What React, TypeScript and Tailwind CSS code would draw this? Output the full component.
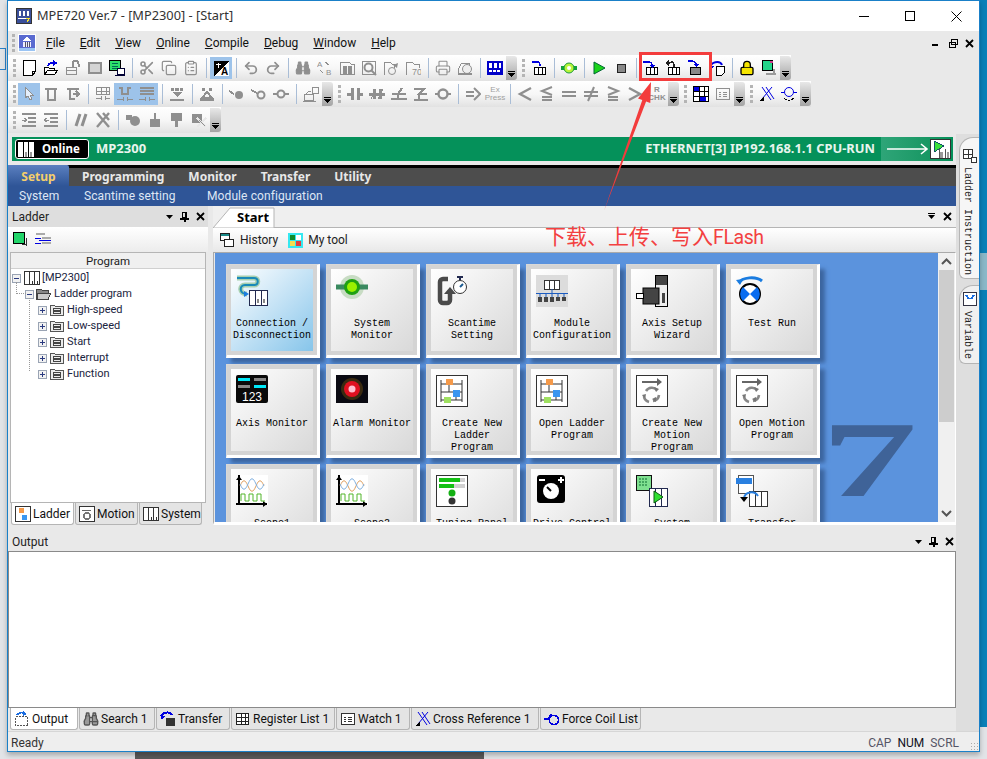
import React from 'react';
import { Scissors, Copy, ClipboardList, Undo2, Redo2, Binoculars, Printer, Lock } from 'lucide-react';

const G = '#8f8f8f';
const B = '#0000e0';

// 16x16 toolbar glyphs
function Svg({ children, size = 16 }: { children: React.ReactNode; size?: number }) {
  return (
    <svg width={size} height={size} viewBox={`0 0 ${size} ${size}`} shapeRendering="crispEdges" className="block shrink-0">
      {children}
    </svg>
  );
}

const plc = (c: string) => (
  <g fill="#fff" stroke={c}>
    <rect x="3.5" y="7.5" width="11" height="7" />
    <path d="M7.5 7.5v7M11.5 7.5v7" />
  </g>
);

const tb: Record<string, React.ReactNode> = {
  new: <Svg><path d="M2.5 0.5h12v11l-3 4h-9z" fill="#fff" stroke="#000" /><path d="M11.5 15v-4h3" fill="none" stroke="#000" /></Svg>,
  open: <Svg><path d="M1.5 14.5v-7h4l1 1h5v6z" fill="#fff" stroke="#000" /><path d="M1.5 14.5l3-4h10l-3 4z" fill="#fff" stroke="#000" /><path d="M5 6c1-3 4-4 7-3" fill="none" stroke={B} strokeWidth="2" /><path d="M10 0l5 3-5 3z" fill={B} /></Svg>,
  openG: <Svg><path d="M1.5 14.5v-7h10v7zM1.5 10.5h10" fill="none" stroke={G} /><path d="M7.5 7v-3a3 3 0 016 0v3" fill="none" stroke={G} strokeWidth="2" /></Svg>,
  film: <Svg><rect x="1" y="2" width="14" height="12" fill={G} /><rect x="3" y="4" width="10" height="8" fill="#d4d4d4" /></Svg>,
  green: <Svg><rect x="0.5" y="0.5" width="11" height="10" fill="#2ee06a" stroke="#000" /><path d="M3 3h6M3 6h6M3 8h6" stroke="#065" /><rect x="8" y="8" width="7" height="6" fill="#fff" stroke="#003" /><path d="M6 15h10" stroke="#003" /></Svg>,
  cut: <Scissors size={16} color={G} strokeWidth={2.4} />,
  copy: <Copy size={16} color={G} strokeWidth={1.8} />,
  paste: <ClipboardList size={16} color={G} strokeWidth={1.8} />,
  lang: <Svg><rect x="1" y="1" width="15" height="15" fill="#000" /><path d="M16 1v15H1z" fill="#fff" /><path d="M3 4h5M5 3v5" stroke="#fff" /><text x="8" y="15" fontSize="10" fontWeight="700" fontFamily="Liberation Sans, sans-serif" fill="#000">A</text></Svg>,
  undo: <Undo2 size={16} color={G} strokeWidth={2.6} />,
  redo: <Redo2 size={16} color={G} strokeWidth={2.6} />,
  bino: <Binoculars size={16} color={G} fill={G} strokeWidth={1.6} />,
  ab: <Svg><text x="0" y="7" fontSize="8" fill={G} fontFamily="Liberation Sans, sans-serif">A</text><text x="9" y="15" fontSize="8" fill={G} fontFamily="Liberation Sans, sans-serif">B</text><path d="M8 2l4 3M3 10l3 3" stroke={G} /></Svg>,
  bino2: <Svg><path d="M1 2h9l2 2h3v10H1z" fill="none" stroke={G} /><rect x="4" y="6" width="4" height="8" fill={G} /><rect x="9" y="6" width="4" height="8" fill={G} /></Svg>,
  scope: <Svg><rect x="1.5" y="1.5" width="13" height="13" fill="none" stroke={G} /><circle cx="7.5" cy="7.5" r="4" fill="none" stroke={G} strokeWidth="2" shapeRendering="auto" /><path d="M10 10l5 5" stroke={G} strokeWidth="2" shapeRendering="auto" /></Svg>,
  folderA: <Svg><path d="M1.5 14.5v-12h6l2 2h2v3" fill="none" stroke={G} /><circle cx="9" cy="11" r="3.5" fill="none" stroke={G} shapeRendering="auto" /><path d="M10 5l5-2-1 5z" fill={G} shapeRendering="auto" /></Svg>,
  folderB: <Svg><path d="M1.5 14.5v-12h6l2 2h5v3" fill="none" stroke={G} /><text x="7" y="15" fontSize="9" fill={G} fontFamily="Liberation Sans, sans-serif">70</text></Svg>,
  print: <Printer size={16} color={G} strokeWidth={1.6} />,
  preview: <Svg><path d="M1.5 13.5v-5l3-5h8v3" fill="none" stroke={G} /><circle cx="10" cy="9" r="4.5" fill="#eee" stroke={G} shapeRendering="auto" /><path d="M1 14h14" stroke={G} strokeWidth="2" /></Svg>,
  reg: <Svg><rect x="0" y="1" width="16" height="14" fill="#0000c8" /><path d="M2 3h3v5H2zM7 3h3v5H7zM12 3h2v5h-2z" fill="#fff" /><path d="M2 11h12" stroke="#fff" strokeWidth="2" strokeDasharray="3 1" /></Svg>,
  plcUp: <Svg>{plc('#000')}<path d="M1 2h5c2 0 3 1 3 4" fill="none" stroke={B} strokeWidth="1.6" /></Svg>,
  led: <Svg><path d="M0 8h16" stroke="#12a33c" strokeWidth="4" /><circle cx="8" cy="8" r="5" fill="#b9f53a" shapeRendering="auto" stroke="#1a9a3a" /><circle cx="8" cy="8" r="2" fill="#fff" shapeRendering="auto" /></Svg>,
  play: <Svg><path d="M3 2l11 6-11 6z" fill="#1bd41b" stroke="#063" shapeRendering="auto" /></Svg>,
  stop: <Svg><rect x="4" y="4" width="8" height="8" fill="#888" stroke="#222" /></Svg>,
  dl: <Svg>{plc('#000')}<path d="M0 2h5c2 0 4 1 4 3" fill="none" stroke={B} strokeWidth="1.4" /><path d="M6 5h6l-3 3z" fill={B} /></Svg>,
  ul: <Svg>{plc('#000')}<path d="M3 5c0-2 2-3 5-3 1 0 1 2 1 5" fill="none" stroke="#222" strokeWidth="1.4" /><path d="M0 3l4-3v6z" fill="#222" /></Svg>,
  flash: <Svg><rect x="3.5" y="7.5" width="10" height="7" fill="#888" stroke="#000" /><path d="M1 1h4c2 0 4 2 4 3" fill="none" stroke={B} strokeWidth="1.4" /><path d="M6 4h6l-3 3z" fill={B} /></Svg>,
  undoDoc: <Svg><path d="M7.5 6.5h8v6l-3 3h-5z" fill="#fff" stroke="#000" /><path d="M2 7C1 2 11 0 13 5" fill="none" stroke={B} strokeWidth="2" shapeRendering="auto" /><path d="M0 5l5 1-3 4z" fill={B} /></Svg>,
  lock: <Lock size={16} color="#000" fill="#f5e400" strokeWidth={2} />,
  greenG: <Svg><rect x="1.5" y="0.5" width="10" height="10" fill="#22d58a" stroke="#000" /><path d="M9 1h3v2H9z" fill="#d04090" /><path d="M5 13.5h10M13 9v5" stroke="#9a9a9a" strokeWidth="2" /></Svg>,
  arrow: <Svg><path d="M4 1v11l3-2 2 4 2-1-2-4h3z" fill="#e4eefa" stroke={G} /></Svg>,
  tee: <Svg><path d="M2 2.5h12M4.5 3v11h7V3" fill="none" stroke={G} strokeWidth="2" /></Svg>,
  teeR: <Svg><path d="M2 2.5h12M4.5 3v10h5" fill="none" stroke={G} strokeWidth="2" /><path d="M8 8h5M11 5l3 3-3 3" fill="none" stroke={G} strokeWidth="1.5" /></Svg>,
  grid: <Svg><rect x="1.5" y="1.5" width="13" height="7" fill="none" stroke={G} /><path d="M1 5h14M6 1v7M11 1v7" stroke={G} /><path d="M1 12h5M10 12h5M6 10v4M10 10v4" stroke={G} /></Svg>,
  branch: <Svg><path d="M2 2h3v6h6V2h3" fill="none" stroke={G} strokeWidth="2" /><path d="M0 13h6M10 13h6M6 11v4M10 11v4" stroke={G} /></Svg>,
  lines: <Svg><path d="M1 2h14M1 5h14M1 8h14" stroke={G} strokeWidth="2" /><path d="M0 13h6M10 13h6M6 11v4M10 11v4" stroke={G} /></Svg>,
  downA: <Svg><path d="M2 2h3v3H2zM6 2h4v3H6zM11 2h3v3h-3z" fill={G} /><path d="M3 6h10l-5 5z" fill={G} /><path d="M1 14h14" stroke={G} strokeWidth="2" /></Svg>,
  upA: <Svg><path d="M3 2h3v3H3zM10 2h3v3h-3z" fill={G} /><path d="M8 6l5 6H3z" fill="none" stroke={G} strokeWidth="2" /><path d="M1 14h14" stroke={G} strokeWidth="2" /></Svg>,
  coilA: <Svg><path d="M0 5l5 3" stroke={G} strokeWidth="2" /><circle cx="10" cy="9" r="4" fill={G} shapeRendering="auto" /></Svg>,
  coilB: <Svg><path d="M0 4l6 3" stroke={G} strokeWidth="2" /><circle cx="10" cy="9" r="3.5" fill="none" stroke={G} strokeWidth="2" shapeRendering="auto" /></Svg>,
  coilC: <Svg><path d="M0 8h4M12 8h4" stroke={G} strokeWidth="2" /><circle cx="8" cy="8" r="3.5" fill="none" stroke={G} strokeWidth="2" shapeRendering="auto" /></Svg>,
  tag: <Svg><path d="M1.5 14.5v-6h9v6z" fill="none" stroke={G} /><path d="M0 15h13" stroke={G} /><path d="M9 1.5h6v6H9z" fill="none" stroke={G} /><path d="M3 8l3-3h2" stroke={G} fill="none" /></Svg>,
  no: <Svg><path d="M0 8h4M12 8h4M5 2v12M11 2v12" stroke={G} strokeWidth="3" /></Svg>,
  nc: <Svg><path d="M0 8h16M5 3v10M11 3v10" stroke={G} strokeWidth="3" /><path d="M2 13l5-10M9 13l5-10" stroke={G} /></Svg>,
  rise: <Svg><path d="M0 13h16" stroke={G} strokeWidth="2" /><path d="M1 8h6l4-6M7 8v5M7 8h8" fill="none" stroke={G} strokeWidth="2" /></Svg>,
  fall: <Svg><path d="M1 3h10l-5 5h8M6 8v6M1 14h14" fill="none" stroke={G} strokeWidth="2" /></Svg>,
  coil: <Svg><path d="M0 8h3M13 8h3" stroke={G} strokeWidth="2" /><circle cx="8" cy="8" r="4.5" fill="none" stroke={G} strokeWidth="2.4" shapeRendering="auto" /></Svg>,
  fwd: <Svg><path d="M1 6h8M1 10h8M9 2l6 6-6 6" fill="none" stroke={G} strokeWidth="2" shapeRendering="auto" /></Svg>,
  lt: <Svg><path d="M14 2L3 8l11 6" fill="none" stroke={G} strokeWidth="2.4" shapeRendering="auto" /></Svg>,
  le: <Svg><path d="M13 1L3 5l10 4M3 11h10M3 14h10" fill="none" stroke={G} strokeWidth="2" shapeRendering="auto" /></Svg>,
  eq: <Svg><path d="M1 6h14M1 10h14" stroke={G} strokeWidth="2.4" /></Svg>,
  ne: <Svg><path d="M1 6h14M1 10h14" stroke={G} strokeWidth="2" /><path d="M11 1L5 15" stroke={G} strokeWidth="2" shapeRendering="auto" /></Svg>,
  ge: <Svg><path d="M3 1l10 4-10 4M3 11h10M3 14h10" fill="none" stroke={G} strokeWidth="2" shapeRendering="auto" /></Svg>,
  gt: <Svg><path d="M2 2l11 6-11 6" fill="none" stroke={G} strokeWidth="2.4" shapeRendering="auto" /></Svg>,
  table: <Svg><rect x="0.5" y="0.5" width="15" height="15" fill="#fff" stroke="#000" /><path d="M0 5h16M0 10h16M6 0v16M11 0v16" stroke="#000" /><rect x="1" y="1" width="5" height="4" fill={B} /><rect x="7" y="11" width="6" height="4" fill={B} /></Svg>,
  watch: <Svg><rect x="1.5" y="2.5" width="13" height="11" rx="1" fill="none" stroke={G} /><path d="M4 6h2M8 6h4M4 8h2M8 8h4M4 10h2M8 10h4" stroke={G} /></Svg>,
  xref: <Svg><path d="M3 1l9 13M7 1l8 12M13 1L3 13" stroke={B} shapeRendering="auto" /><path d="M0 15h5v-5z" fill="#000" /></Svg>,
  forceCoil: <Svg><path d="M0 6h3M13 6h3" stroke={B} /><circle cx="8" cy="6" r="4.5" fill="none" stroke={B} shapeRendering="auto" /><path d="M3 12c3 3 7 3 10 0" fill="none" stroke="#000" /></Svg>,
  indent: <Svg><path d="M1 2h14M7 6h8M7 10h8M1 14h14" stroke={G} strokeWidth="2" /><path d="M1 8h4M3 6l3 2-3 2" fill="none" stroke={G} /></Svg>,
  outdent: <Svg><path d="M1 2h14M7 6h8M7 10h8M1 14h14" stroke={G} strokeWidth="2" /><path d="M2 8h4M4 6L1 8l3 2" fill="none" stroke={G} /></Svg>,
  slash: <Svg><path d="M7 2L3 14M13 2L9 14" stroke={G} strokeWidth="3" shapeRendering="auto" /></Svg>,
  cross: <Svg><path d="M2 1l12 14M8 1l6 7M14 1L2 15" stroke={G} strokeWidth="2.4" shapeRendering="auto" /></Svg>,
  nodeA: <Svg><circle cx="10" cy="9" r="5" fill={G} shapeRendering="auto" /><rect x="1" y="3" width="6" height="5" fill={G} /></Svg>,
  nodeB: <Svg><rect x="3" y="7" width="10" height="8" fill={G} /><rect x="7" y="1" width="2" height="6" fill={G} /></Svg>,
  nodeC: <Svg><rect x="2" y="1" width="11" height="8" fill={G} /><rect x="6" y="9" width="3" height="6" fill={G} /></Svg>,
  nodeD: <Svg><rect x="1" y="2" width="10" height="9" fill={G} /><path d="M6 6l9 9M15 6l-9 9" stroke="#e8e8e8" strokeWidth="2" /><path d="M8 8l6 6" stroke={G} /></Svg>,
};

type Item = string;

const row1: Item[] = ['new', 'open', 'openG', 'film', 'green', '|', 'cut', 'copy', 'paste', '|', '*lang', '|', 'undo', 'redo', '|', 'bino', 'ab', 'bino2', 'scope', 'folderA', 'folderB', '|', 'print', 'preview', '|', 'reg', 'v', ':', 'plcUp', '|', 'led', '|', 'play', 'stop', '|', 'dl', 'ul', 'flash', 'undoDoc', '|', 'lock', 'greenG', 'v'];
const row2: Item[] = ['*arrow', 'tee', 'teeR', '|', 'grid', '*branch', '*lines', '|', 'downA', '|', 'upA', '|', 'coilA', 'coilB', 'coilC', '|', 'tag', 'v', ':', 'no', 'nc', 'rise', 'fall', 'coil', '|', 'fwd', 'expr', '|', 'lt', 'le', 'eq', 'ne', 'ge', 'gt', 'rchk', 'v', ':', 'table', 'watch', 'v', ':', 'xref', 'forceCoil', 'v'];
const row3: Item[] = ['indent', 'outdent', '|', 'slash', 'cross', '|', 'nodeA', 'nodeB', 'nodeC', 'nodeD', 'v'];

function Grip() {
  return <div className="h-[18px] w-[3px] shrink-0 bg-[repeating-linear-gradient(to_bottom,#b4b4b4_0,#b4b4b4_3px,transparent_3px,transparent_5px)]" />;
}

function ToolItem({ item }: { item: Item }) {
  if (item === '|') {
    return <div className="mx-[3.5px] h-[20px] w-px shrink-0 bg-[#a9bdd6]" />;
  }
  if (item === 'v') {
    return (
      <div className="relative flex h-[24px] w-[11px] shrink-0 items-end justify-center rounded-r-[3px] bg-gradient-to-b from-[#e8e8e8] to-[#a4a4a4] pb-[3px]">
        <svg width="7" height="6" viewBox="0 0 7 6" className="block" shapeRendering="crispEdges">
          <path d="M0 0h7v1H0zM0 2h7v1H0zM1 3h5v1H1zM2 4h3v1H2zM3 5h1v1H3z" fill="#000" />
        </svg>
      </div>
    );
  }
  if (item === ':') {
    return <div className="ml-[5px] mr-[3px] flex h-full items-center"><Grip /></div>;
  }
  const active = item.startsWith('*');
  const name = active ? item.slice(1) : item;
  return (
    <div className={`flex h-[22px] w-[22px] shrink-0 items-center justify-center ${active ? 'bg-[#9dc3ea]' : ''}`}>
      {name === 'expr' ? (
        <span className="text-center font-['Liberation_Sans',sans-serif] text-[8px] leading-[8px] text-[#a0a0a0]">Ex<br />Press</span>
      ) : name === 'rchk' ? (
        <span className="text-center font-['Liberation_Sans',sans-serif] text-[8px] font-bold leading-[8px] text-[#909090]">R<br />CHK</span>
      ) : (
        tb[name]
      )}
    </div>
  );
}

function Toolbar({ items }: { items: Item[] }) {
  return (
    <div className="flex h-[26px] w-fit items-center bg-gradient-to-b from-white via-[#f7f7f7] to-[#e2e2e2] pl-[5px]">
      <Grip />
      <div className="w-[2px]" />
      {items.map((item, i) => <ToolItem key={i} item={item} />)}
    </div>
  );
}

// 32x32 launcher icons
function Big({ children }: { children: React.ReactNode }) {
  return <svg width="32" height="32" viewBox="0 0 32 32" className="block">{children}</svg>;
}

const ladderIcon = (
  <Big>
    <rect x="0.5" y="0.5" width="31" height="31" fill="#fff" stroke="#333" />
    <path d="M5 5v22M26 5v22M5 9h21M5 17h21M5 25h21" stroke="#333" fill="none" />
    <path d="M13 9v8M20 17v8" stroke="#333" />
    <rect x="10" y="4" width="7" height="6" fill="#f59a4a" />
    <rect x="17" y="15" width="7" height="7" fill="#3a96f0" />
    <rect x="8" y="22" width="7" height="6" fill="#9fe060" />
  </Big>
);

const motionIcon = (
  <Big>
    <rect x="0.5" y="0.5" width="31" height="31" fill="#fff" stroke="#333" />
    <path d="M6 7h19" stroke="#666" strokeWidth="2" />
    <path d="M21 3l5 4-5 4z" fill="#666" />
    <path d="M10 16a7 7 0 0111-1M23 20a7 7 0 01-6 6M13 27a7 7 0 01-5-7" fill="none" stroke="#888" strokeWidth="2.6" />
    <path d="M18 12l5 2-3 3zM20 27l-4-3 4-2zM6 20l4-1-1 4z" fill="#777" />
  </Big>
);

const scopeIcon = (
  <Big>
    <rect x="3" y="0" width="29" height="30" fill="#fff" />
    <path d="M3 0v30M0 29h31" stroke="#000" strokeWidth="2" />
    <path d="M0 5l3-4 3 4zM27 26l4 3-4 3z" fill="#000" />
    <path d="M4 11c3-7 5-7 8 0s5 7 8 0 5-7 8 0" fill="none" stroke="#e0a060" />
    <path d="M4 9c3 7 5 7 8 0s5-7 8 0 5 7 8 0" fill="none" stroke="#80b0e0" />
    <path d="M5 26v-7h4v7h4v-7h4v7h4v-7h4v7h4" fill="none" stroke="#52b52a" />
  </Big>
);

const led = (
  <Big>
    <circle cx="16" cy="12" r="12" fill="#c8dcc4" />
    <path d="M0 12h32" stroke="#3a8a60" strokeWidth="5" />
    <circle cx="16" cy="12" r="8" fill="#1fa012" />
    <circle cx="16" cy="12" r="5" fill="#9af000" />
  </Big>
);

const cards: { label: string[]; icon: React.ReactNode; on?: boolean }[] = [
  {
    label: ['Connection /', 'Disconnection'], on: true, icon: (
      <Big>
        <path d="M1 3h17c5 0 5 7 0 7H9c-6 0-6 9 2 9" fill="none" stroke="#a8d0b0" strokeWidth="5" />
        <path d="M1 3h17c5 0 5 7 0 7H9c-6 0-6 9 2 9" fill="none" stroke="#1a8ab8" strokeWidth="2" />
        <path d="M8 16l5 3-5 3z" fill="#1a7ce0" />
        <rect x="13.5" y="15.5" width="18" height="15" fill="#fff" stroke="#222a50" />
        <path d="M19.5 15.5v15M25.5 15.5v15" stroke="#222a50" />
        <path d="M22 24v4M28 24v4" stroke="#888" strokeWidth="2" />
      </Big>
    ),
  },
  { label: ['System', 'Monitor'], icon: led },
  {
    label: ['Scantime', 'Setting'], icon: (
      <Big>
        <path d="M12 4H7a3 3 0 00-3 3v18a3 3 0 003 3h4a3 3 0 003-3V15" fill="none" stroke="#4a4a4a" strokeWidth="4.500" />
        <path d="M8 19l6-7 6 7z" fill="#4a4a4a" />
        <circle cx="24" cy="12" r="6.500" fill="#fff" stroke="#333" />
        <path d="M21 2h6M24 2v3" stroke="#222a50" strokeWidth="2" />
        <path d="M24 12l3-3" stroke="#1a5a90" strokeWidth="2" />
      </Big>
    ),
  },
  {
    label: ['Module', 'Configuration'], icon: (
      <Big>
        <rect x="0" y="0" width="32" height="32" fill="#dcdcdc" />
        <rect x="8.5" y="5.5" width="15" height="9" fill="#fff" stroke="#333" />
        <path d="M13.5 5.5v9M18.5 5.5v9" stroke="#333" />
        <path d="M16 14v4M0 18.500h32" stroke="#1c5cc0" />
        <path d="M4 19v3M10 19v3M16 19v3M22 19v3M28 19v3" stroke="#1c5cc0" />
        <path d="M2 22h4v5H2zM8 22h4v5H8zM14 22h4v5h-4zM20 22h4v4h-4zM26 22h4v4h-4z" fill="#444" />
      </Big>
    ),
  },
  {
    label: ['Axis Setup', 'Wizard'], icon: (
      <Big>
        <rect x="19.5" y="0.5" width="12" height="31" fill="#eee" stroke="#000" />
        <rect x="20" y="1" width="11" height="9" fill="#444" />
        <rect x="26" y="18" width="3" height="10" fill="#444" />
        <rect x="7" y="13" width="16" height="16" fill="#444" stroke="#000" />
        <rect x="0.5" y="18.500" width="7" height="5" fill="#fff" stroke="#000" />
      </Big>
    ),
  },
  {
    label: ['Test Run'], icon: (
      <Big>
        <path d="M3 8C6 2 20 1 26 6" fill="none" stroke="#1a7ce0" strokeWidth="3" />
        <path d="M0 5l7-1-3 6z" fill="#1a7ce0" />
        <circle cx="14" cy="19" r="10" fill="#fff" stroke="#000" strokeWidth="2" />
        <path d="M7 12l7 7-7 7a10 10 0 010-14zM21 12l-7 7 7 7a10 10 0 000-14z" fill="#0a6cf0" />
      </Big>
    ),
  },
  {
    label: ['Axis Monitor'], icon: (
      <Big>
        <rect x="0" y="0" width="32" height="28" rx="2" fill="#0a0a0a" />
        <rect x="2" y="3" width="12" height="3" fill="#00e8f8" />
        <rect x="18" y="3" width="12" height="3" fill="#888" />
        <rect x="2" y="10" width="12" height="3" fill="#888" />
        <rect x="18" y="10" width="12" height="3" fill="#00e8f8" />
        <text x="16" y="26" textAnchor="middle" fontSize="12" fill="#fff" fontFamily="Liberation Sans, sans-serif">123</text>
      </Big>
    ),
  },
  {
    label: ['Alarm Monitor'], icon: (
      <Big>
        <rect x="0" y="0" width="32" height="28" fill="#0a0a12" />
        <circle cx="16" cy="14" r="11" fill="#3a2a10" />
        <circle cx="16" cy="14" r="8" fill="#e01020" />
        <circle cx="16" cy="14" r="3.500" fill="#ffc0d0" />
      </Big>
    ),
  },
  { label: ['Create New', 'Ladder', 'Program'], icon: ladderIcon },
  { label: ['Open Ladder', 'Program'], icon: ladderIcon },
  { label: ['Create New', 'Motion', 'Program'], icon: motionIcon },
  { label: ['Open Motion', 'Program'], icon: motionIcon },
  { label: ['Scope1'], icon: scopeIcon },
  { label: ['Scope2'], icon: scopeIcon },
  {
    label: ['Tuning Panel'], icon: (
      <Big>
        <rect x="0.5" y="0.5" width="31" height="31" fill="#fff" stroke="#333" />
        <rect x="3" y="3" width="26" height="4" fill="#d0d0d0" />
        <rect x="3" y="3" width="21" height="4" fill="#14c014" />
        <rect x="3" y="9" width="26" height="4" fill="#d0d0d0" />
        <rect x="3" y="9" width="15" height="4" fill="#14c014" />
        <circle cx="16" cy="18" r="3.500" fill="#14b014" />
        <circle cx="16" cy="26" r="3.500" fill="#333" />
      </Big>
    ),
  },
  {
    label: ['Drive Control'], icon: (
      <Big>
        <rect x="1" y="0" width="28" height="28" rx="3" fill="#000" />
        <path d="M3 5h6" stroke="#fff" strokeWidth="2" />
        <path d="M22 5h6M25 2v6" stroke="#fff" strokeWidth="2" />
        <circle cx="15" cy="16" r="8" fill="#fff" />
        <path d="M15 16l-4-4" stroke="#000" strokeWidth="2" />
      </Big>
    ),
  },
  {
    label: ['System'], icon: (
      <Big>
        <rect x="0.5" y="0.5" width="15" height="15" fill="#7fe090" stroke="#111" />
        <path d="M3 4h9M3 7h9M3 10h9" stroke="#0c6c30" strokeDasharray="2 1" />
        <rect x="13.5" y="13.5" width="18" height="18" fill="#fff" stroke="#222a50" />
        <path d="M19.5 13.500v18M25.5 13.500v18" stroke="#222a50" />
        <path d="M18 16l9 6-9 6z" fill="#30e030" stroke="#0a5a10" />
      </Big>
    ),
  },
  {
    label: ['Transfer'], icon: (
      <Big>
        <rect x="2.500" y="0.5" width="15" height="18" fill="#fff" stroke="#555" />
        <rect x="0" y="3" width="16" height="6" fill="#2a80e0" />
        <rect x="13.5" y="16.5" width="18" height="15" fill="#fff" stroke="#333" />
        <path d="M19.5 16.500v15M25.5 16.500v15" stroke="#333" />
        <path d="M8 23c1-6 10-8 14-2" fill="none" stroke="#2a80e0" strokeWidth="2" />
        <path d="M4 22l8 0-4 5z" fill="#000" />
      </Big>
    ),
  },
];

function Card({ label, icon, on }: { label: string[]; icon: React.ReactNode; on?: boolean }) {
  return (
    <div className="h-[94px] w-[94px] shrink-0 border-[1px] border-b-[3px] border-r-[3px] border-[#d8d8d8] border-b-white border-r-white bg-[#d4d4d4] p-[4px] shadow-[5px_5px_4px_#3c659f]">
      <div className={`flex h-full w-full flex-col items-center overflow-visible pt-[6px] ${on ? 'bg-gradient-to-br from-white to-[#86c5ea]' : 'bg-gradient-to-br from-white to-[#d9d9d9]'}`}>
        <div className="ml-[5px] h-[32px] w-[32px] self-start">{icon}</div>
        <div className="mt-[11px] whitespace-nowrap text-center font-['Liberation_Mono',monospace] text-[10px] leading-[12px] text-black">
          {label.map(l => <div key={l}>{l}</div>)}
        </div>
      </div>
    </div>
  );
}

function PanelButtons() {
  return (
    <div className="flex items-center gap-[7px]">
      <svg width="7" height="4" viewBox="0 0 7 4" className="block"><path d="M0 0h7L3.500 4z" fill="#000" /></svg>
      <svg width="9" height="10" viewBox="0 0 9 10" className="block" shapeRendering="crispEdges">
        <path d="M2.500 0.500h4v5h-4zM0 6h9v1H0zM4 7h1v3H4z" fill="none" stroke="#000" />
        <path d="M5 1h1v5H5z" fill="#000" />
      </svg>
      <svg width="9" height="9" viewBox="0 0 9 9" className="block"><path d="M1 1l7 7M8 1L1 8" stroke="#000" strokeWidth="1.800" /></svg>
    </div>
  );
}

function Folder() {
  return (
    <svg width="14" height="12" viewBox="0 0 14 12" className="block shrink-0" shapeRendering="crispEdges">
      <path d="M0.500 11.500v-10h4l1 1h8v9z" fill="#ececec" stroke="#555" />
      <path d="M3.500 4.500h7v2h-7zM3.500 7.500h7v2h-7z" fill="none" stroke="#444" />
    </svg>
  );
}

function TreeBox({ open }: { open?: boolean }) {
  return (
    <div className="flex h-[9px] w-[9px] shrink-0 items-center justify-center border border-[#9aa4b4] bg-[#f2f2f2]">
      <svg width="5" height="5" viewBox="0 0 5 5" className="block" shapeRendering="crispEdges">
        <path d={open ? 'M0 2h5v1H0z' : 'M0 2h5v1H0zM2 0h1v5H2z'} fill="#2a3a80" />
      </svg>
    </div>
  );
}

function Tab({ label, icon, active, w }: { label: string; icon: React.ReactNode; active?: boolean; w: string }) {
  return (
    <div className={`flex h-[22px] items-center gap-[2px] rounded-b-[3px] border border-t-0 border-[#b5b5b5] pl-[3px] pt-[1px] font-['Roboto',sans-serif] text-[12px] text-[#111] ${w} ${active ? 'bg-white' : 'bg-[#e4e4e4]'}`}>
      <span className="shrink-0">{icon}</span>
      <span className="whitespace-nowrap">{label}</span>
    </div>
  );
}

const miniPlc = (
  <svg width="16" height="16" viewBox="0 0 16 16" className="block" shapeRendering="crispEdges">
    <rect x="0.500" y="1.500" width="15" height="13" fill="#fff" stroke="#333" />
    <path d="M5.500 1.500v13M10.500 1.500v13M8 11v3M13 11v3" stroke="#333" />
  </svg>
);

const outputTabs: { label: string; w: string; icon: React.ReactNode; active?: boolean }[] = [
  { label: 'Output', w: 'w-[68px]', active: true, icon: <Svg><rect x="1.500" y="5.500" width="12" height="9" fill="#fff" stroke="#555" strokeDasharray="2 1" /><path d="M3 4c2-3 6-3 8-1" stroke="#1a6ce0" strokeWidth="1.600" fill="none" /><path d="M9 0l4 3-4 2z" fill="#1a6ce0" /></Svg> },
  { label: 'Search 1', w: 'w-[76px]', icon: <Binoculars size={16} color="#555" fill="#999" /> },
  { label: 'Transfer', w: 'w-[74px]', icon: <Svg><path d="M2 6C1 1 10 0 12 4" fill="none" stroke={B} strokeWidth="2" /><path d="M0 4l5 1-3 4z" fill={B} /><rect x="6" y="7" width="9" height="8" fill="#333" /></Svg> },
  { label: 'Register List 1', w: 'w-[104px]', icon: <Svg><rect x="1.500" y="2.500" width="12" height="11" fill="#fff" stroke="#222" /><path d="M1 6h13M1 10h13M6 2v11M10 2v11" stroke="#222" /></Svg> },
  { label: 'Watch 1', w: 'w-[74px]', icon: <Svg><rect x="1.500" y="2.500" width="13" height="11" rx="1" fill="#fff" stroke="#333" /><path d="M4 6h2M8 6h4M4 8h2M8 8h4M4 10h2M8 10h4" stroke="#333" /></Svg> },
  { label: 'Cross Reference 1', w: 'w-[128px]', icon: tb.xref },
  { label: 'Force Coil List', w: 'w-[101px]', icon: <Svg><path d="M0 8h4l3-5" stroke={B} strokeWidth="1.500" fill="none" /><circle cx="10" cy="9" r="4.500" fill="none" stroke={B} strokeWidth="1.600" /></Svg> },
];

export default function App() {
  const sans = "font-['Roboto',sans-serif]";
  return (
    <div className="relative h-[759px] w-[987px] overflow-hidden bg-[#e2e4e7]">
      {/* what shows of the desktop behind the window */}
      <div className="absolute left-[980px] top-0 h-[727px] w-[7px] bg-[#0a80b8]" />
      <div className="absolute left-[980px] top-[253px] h-[37px] w-[7px] bg-[#8bb8c8]" />
      <div className="absolute left-[135px] top-[752px] h-[7px] w-[349px] bg-[#5a5a5a]" />
      <div className="absolute left-0 top-[48px] h-[22px] w-[6px] border border-l-0 border-[#2a80c8]" />

      {/* window */}
      <div className="relative ml-[7px] flex h-[752px] w-[973px] flex-col border border-[#1a80c8] bg-[#e9e9e9] shadow-[0_3px_5px_#0004]">
        {/* title bar */}
        <div className="flex h-[30px] shrink-0 items-center bg-white pl-[8px]">
          <svg width="16" height="16" viewBox="0 0 16 16" className="block" shapeRendering="crispEdges">
            <rect x="0.500" y="0.500" width="15" height="15" fill="#3a4f9a" stroke="#333" />
            <path d="M3 3h2v5H3zM7 3h2v5H7zM11 3h2v5h-2z" fill="#fff" />
            <path d="M2 10h8" stroke="#fff" />
            <path d="M10 10h4l-2 4h-1l1-3h-2z" fill="#f6e02a" />
          </svg>
          <span className="ml-[5px] font-['Noto_Sans',sans-serif] text-[12.800px] text-[#333]">MPE720 Ver.7 - [MP2300] - [Start]</span>
          <div className="ml-auto flex h-full">
            <div className="flex w-[46px] items-center justify-center"><div className="h-px w-[10px] bg-black" /></div>
            <div className="flex w-[46px] items-center justify-center"><div className="h-[10px] w-[10px] border border-black" /></div>
            <div className="flex w-[46px] items-center justify-center">
              <svg width="11" height="11" viewBox="0 0 11 11" className="block"><path d="M.5.5l10 10M10.500.5l-10 10" stroke="#000" /></svg>
            </div>
          </div>
        </div>

        {/* menu */}
        <div className="flex h-[24px] shrink-0 items-center pl-[4px]">
          <Grip />
          <svg width="18" height="18" viewBox="0 0 18 18" className="ml-[3px] block" shapeRendering="crispEdges">
            <rect x="0" y="0" width="18" height="18" fill="#fff" />
            <rect x="1" y="1" width="16" height="16" fill="#5a6ad0" />
            <path d="M4 7l5-4 5 4z" fill="#fff" />
            <path d="M5 8h8v5H5z" fill="#eef" />
            <path d="M7 8v5M9 8v5M11 8v5" stroke="#556" />
            <rect x="1" y="14" width="16" height="3" fill="#9ac4f4" />
          </svg>
          <div className={`ml-[10px] flex gap-[15px] ${sans} text-[12px] text-[#111]`}>
            {[['F', 'ile'], ['E', 'dit'], ['V', 'iew'], ['O', 'nline'], ['C', 'ompile'], ['D', 'ebug'], ['W', 'indow'], ['H', 'elp']].map(([a, b]) => (
              <span key={b}><span className="underline">{a}</span>{b}</span>
            ))}
          </div>
          <div className="ml-auto mr-[5px] flex items-center gap-[6px]">
            <div className="mr-[5px] mt-[3px] h-[2px] w-[6px] bg-black" />
            <svg width="9" height="9" viewBox="0 0 9 9" className="block" shapeRendering="crispEdges">
              <path d="M2.500.5h6v5h-6zM.5 3.500h6v5h-6z" fill="#e9e9e9" stroke="#000" />
            </svg>
            <svg width="9" height="9" viewBox="0 0 9 9" className="ml-[1px] block"><path d="M1 1l7 7M8 1L1 8" stroke="#000" strokeWidth="1.800" /></svg>
          </div>
        </div>

        {/* toolbars */}
        <Toolbar items={row1} />
        <Toolbar items={row2} />
        <Toolbar items={row3} />

        {/* status strip */}
        <div className="ml-[4px] mt-[4px] flex h-[24px] w-[941px] shrink-0 items-center bg-[#05915a] pl-[3px] pr-[2px]">
          <div className="flex h-[20px] w-[74px] items-center gap-[8px] rounded-[3px] border border-white bg-black pl-[2px]">
            <svg width="16" height="15" viewBox="0 0 16 15" className="block" shapeRendering="crispEdges">
              <rect x="0" y="0" width="16" height="15" fill="#fff" />
              <path d="M5 0v15M10 0v15" stroke="#000" />
              <path d="M7 10h2v5H7zM12 10h2v5h-2z" fill="#999" />
            </svg>
            <span className="font-['Noto_Sans',sans-serif] text-[11.500px] font-bold text-white">Online</span>
          </div>
          <span className="ml-[7px] font-['Noto_Sans',sans-serif] text-[13px] font-bold text-[#e8f5ee]">MP2300</span>
          <span className="ml-auto font-['Noto_Sans',sans-serif] text-[12.900px] font-bold text-[#e8f5ee]">ETHERNET[3] IP192.168.1.1 CPU-RUN</span>
          <div className="ml-[6px] flex h-full w-[70px] items-center bg-gradient-to-r from-[#2ea578] to-[#05915a] pl-[6px]">
            <svg width="42" height="12" viewBox="0 0 42 12" className="block"><path d="M0 6h40M34 1l6 5-6 5" fill="none" stroke="#fff" strokeWidth="1.600" /></svg>
            <svg width="21" height="20" viewBox="0 0 21 20" className="ml-[1px] block shrink-0" shapeRendering="crispEdges">
              <rect x="0.500" y="0.500" width="20" height="19" fill="#fff" stroke="#333" />
              <path d="M9 10v9M15 10v9" stroke="#555" />
              <path d="M10 13h3v6h-3zM17 13h2v6h-2z" fill="#999" />
              <path d="M4 2l10 5-10 6z" fill="#3ae03a" stroke="#156" />
            </svg>
          </div>
        </div>

        {/* ribbon tabs */}
        <div className="mt-[4px] flex h-[21px] w-[948px] shrink-0 items-stretch border-t-[3px] border-black bg-[#4d4d4d] font-['Noto_Sans',sans-serif] text-[12px] font-bold">
          <div className="-mt-[3px] flex w-[61px] items-center justify-center rounded-tr-[2px] bg-gradient-to-b from-[#5b80c0] to-[#2f5597] pt-[2px] text-[#f5cf6b]">Setup</div>
          <div className="ml-[13px] flex items-center gap-[24px] text-[#e8e8e8]">
            <span>Programming</span>
            <span>Monitor</span>
            <span>Transfer</span>
            <span>Utility</span>
          </div>
        </div>
        <div className={`flex h-[20px] w-[948px] shrink-0 items-center bg-[#2f5597] pl-[11px] ${sans} text-[12px] tracking-[0.1px] text-[#dfe7f5]`}>
          <span className="w-[65px]">System</span>
          <span className="w-[123px]">Scantime setting</span>
          <span>Module configuration</span>
        </div>

        {/* body */}
        <div className="flex min-h-0 flex-1">
          <div className="flex min-w-0 flex-1 flex-col">
            <div className="flex h-[319px] shrink-0">
              {/* left panel */}
              <div className="flex h-full w-[200px] shrink-0 flex-col">
                <div className={`flex h-[21px] shrink-0 items-center justify-between bg-[#dedede] pl-[4px] pr-[3px] ${sans} text-[12px] text-[#222]`}>
                  <span>Ladder</span>
                  <PanelButtons />
                </div>
                <div className="flex h-[25px] shrink-0 items-center gap-[6px] bg-gradient-to-b from-white to-[#ececec] pl-[5px]">
                  <Svg><rect x="0.500" y="0.500" width="11" height="11" fill="#22d56a" stroke="#000" /><path d="M9 12h5M13 6v8" stroke="#333" /></Svg>
                  <Svg><path d="M1 2h9" stroke="#aaa" strokeWidth="2" /><path d="M0 6h6M4 8h12" stroke={B} /><path d="M7 6h9M7 11h9" stroke="#aaa" strokeWidth="2" /><path d="M0 11h6" stroke={B} /></Svg>
                </div>
                <div className="mx-[2px] flex min-h-0 flex-1 flex-col border border-[#b5b5b5] bg-white">
                  <div className={`flex h-[16px] shrink-0 items-center justify-center border-b border-[#d0d0d0] bg-[#f0f0f0] pt-[2px] ${sans} text-[11.500px] text-[#222]`}>Program</div>
                  <div className={`relative flex-1 pt-[1px] ${sans} text-[11px] text-[#1a2440]`}>
                    <div className="flex h-[16px] items-center gap-[2px] pl-[1px]"><TreeBox open /><span className="ml-px">{miniPlc}</span><span>[MP2300]</span></div>
                    <div className="flex h-[16px] items-center gap-[2px] pl-[14px]">
                      <TreeBox open />
                      <svg width="16" height="12" viewBox="0 0 16 12" className="block" shapeRendering="crispEdges"><path d="M.5 11.500v-10h5l1 1h6v9z" fill="#888" stroke="#444" /><path d="M2 5h13l-3 6H1z" fill="#ccc" stroke="#444" /></svg>
                      <span>Ladder program</span>
                    </div>
                    {['High-speed', 'Low-speed', 'Start', 'Interrupt', 'Function'].map(n => (
                      <div key={n} className="flex h-[16px] items-center gap-[3px] pl-[27px]"><TreeBox /><Folder /><span>{n}</span></div>
                    ))}
                    {/* dotted tree guides */}
                    <div className="absolute left-[5px] top-[13px] h-[12px] w-[10px] border-b border-l border-dotted border-[#999]" />
                    <div className="absolute left-[18px] top-[29px] h-[73px] w-[9px] border-l border-dotted border-[#999]" />
                  </div>
                </div>
                <div className="ml-[3px] flex h-[22px] shrink-0 gap-[1px] pr-[6px]">
                  <Tab label="Ladder" w="w-[63px]" active icon={<Svg><rect x="0.500" y="0.500" width="15" height="15" fill="#fff" stroke="#333" /><rect x="4" y="2" width="5" height="5" fill="#f59a4a" /><rect x="7" y="9" width="5" height="5" fill="#3a96f0" /></Svg>} />
                  <Tab label="Motion" w="w-[63px]" icon={<Svg><rect x="0.500" y="0.500" width="15" height="15" fill="#fff" stroke="#333" /><path d="M3 4h9" stroke="#666" /><circle cx="8" cy="10" r="3" fill="none" stroke="#777" strokeWidth="1.500" /></Svg>} />
                  <Tab label="System" w="w-[63px]" icon={miniPlc} />
                </div>
              </div>

              {/* start page */}
              <div className="ml-[5px] flex min-w-0 flex-1 flex-col">
                <div className="flex h-[22px] shrink-0 items-end justify-between border-b border-[#b5b5b5] bg-[#efefef] pr-[4px]">
                  <div className="relative -mb-px flex h-[21px] w-[62px] items-center font-['Noto_Sans',sans-serif] text-[13px] font-bold text-black">
                    <svg width="62" height="21" viewBox="0 0 62 21" className="absolute left-0 top-0 block">
                      <path d="M0 21L17 1h44v20z" fill="#fff" stroke="#b5b5b5" />
                    </svg>
                    <span className="relative ml-[24px]">Start</span>
                  </div>
                  <div className="mb-[6px] flex items-center gap-[8px]">
                    <svg width="7" height="7" viewBox="0 0 7 7" className="block"><path d="M0 0h7v1H0zM0 2h7L3.500 6z" fill="#000" /></svg>
                    <svg width="9" height="9" viewBox="0 0 9 9" className="block"><path d="M1 1l7 7M8 1L1 8" stroke="#000" strokeWidth="1.800" /></svg>
                  </div>
                </div>
                <div className={`flex h-[24px] shrink-0 items-center gap-[5px] bg-gradient-to-b from-white to-[#e8e8e8] pl-[6px] ${sans} text-[12px] text-[#222]`}>
                  <Svg><rect x="1.500" y="1.500" width="9" height="7" fill="#fff" stroke="#222" /><rect x="2" y="2" width="8" height="2" fill="#1a8a8a" /><rect x="5.500" y="7.500" width="9" height="7" fill="#fff" stroke="#222" /></Svg>
                  <span>History</span>
                  <div className="ml-[5px]">
                    <svg width="15" height="15" viewBox="0 0 15 15" className="block" shapeRendering="crispEdges">
                      <rect width="15" height="15" fill="#35e8f0" />
                      <rect x="2" y="2" width="5" height="5" fill="#118a2a" />
                      <rect x="8" y="2" width="5" height="5" fill="#fff" />
                      <rect x="2" y="8" width="5" height="5" fill="#f5e050" />
                      <rect x="8" y="8" width="5" height="5" fill="#e04040" />
                    </svg>
                  </div>
                  <span>My tool</span>
                </div>
                <div className="flex min-h-0 flex-1 border border-b-[3px] border-[#aaa] border-b-white border-r-white pl-[1px]">
                  <div className="relative min-w-0 flex-1 overflow-hidden bg-[#5b93dd] pl-[11px] pt-[11px]">
                    <div className="grid w-[600px] grid-cols-[repeat(6,100px)] gap-y-[6px]">
                      {cards.map(c => <Card key={c.label.join()} {...c} />)}
                    </div>
                    <span className="absolute left-[606px] top-[132px] origin-left scale-x-[1.780] font-['Liberation_Serif',serif] text-[108px] font-bold leading-[150px] text-[#3f6398]">7</span>
                  </div>
                  <div className="flex w-[17px] shrink-0 flex-col items-center bg-[#f0f0f0]">
                    <svg width="11" height="7" viewBox="0 0 11 7" className="mt-[5px] block"><path d="M1 6l4.500-4.500L10 6" fill="none" stroke="#555" strokeWidth="2" /></svg>
                    <div className="mt-[5px] h-[152px] w-[15px] bg-[#cdcdcd]" />
                    <svg width="11" height="7" viewBox="0 0 11 7" className="mb-[5px] mt-auto block"><path d="M1 1l4.500 4.500L10 1" fill="none" stroke="#555" strokeWidth="2" /></svg>
                  </div>
                </div>
              </div>
            </div>

            {/* output panel */}
            <div className="mt-[4px] flex min-h-0 flex-1 flex-col">
              <div className={`flex h-[22px] shrink-0 items-center justify-between pl-[4px] pr-[2px] pt-[3px] ${sans} text-[12px] text-[#222]`}>
                <span>Output</span>
                <PanelButtons />
              </div>
              <div className="flex-1 border border-[#8a8a8a] bg-white" />
              <div className="ml-[2px] flex h-[22px] shrink-0 gap-[1px]">
                {outputTabs.map(t => <Tab key={t.label} {...t} />)}
              </div>
              <div className="h-[1px] shrink-0" />
            </div>
          </div>

          {/* right dock */}
          <div className="flex w-[23px] shrink-0 flex-col bg-[#dedede]" />
        </div>

        {/* status bar */}
        <div className={`relative flex h-[20px] shrink-0 items-center justify-between border-t border-[#d6d6d6] bg-[#eeeeee] pl-[3px] pr-[20px] pt-[3px] ${sans} text-[12px] text-[#333]`}>
          <span>Ready</span>
          <div className="flex gap-[6px] text-[#556]">
            <span>CAP</span>
            <span className="text-[#112]">NUM</span>
            <span>SCRL</span>
          </div>
          <div className="absolute bottom-[1px] right-[1px] h-[8px] w-[8px] bg-[radial-gradient(#aaa_1px,transparent_1px)] bg-[length:3px_3px]" />
        </div>
      </div>

      {/* vertical dock tabs lie over the dock strip */}
      <div className="absolute left-[956px] top-[134px] h-[240px] w-[23px] bg-[#dedede]">
        <div className="absolute left-[3px] top-[3px] flex h-[142px] w-[20px] flex-col items-start rounded-bl-[6px] rounded-tl-[14px] border border-r-0 border-[#b5b5b5] bg-[#f6f6f6] pl-[2px] pt-[10px]">
          <Svg><rect x="1.500" y="1.500" width="9" height="9" fill="#fff" stroke="#333" /><path d="M1 6h9M6 1v9" stroke="#333" /><rect x="9.500" y="9.500" width="5" height="5" fill="#fff" stroke="#333" /></Svg>
          <span className="-ml-[1px] mt-[3px] font-['Liberation_Mono',monospace] text-[10px] leading-[12px] text-[#222] [writing-mode:vertical-rl]">Ladder Instruction</span>
        </div>
        <div className="absolute left-[3px] top-[151px] flex h-[79px] w-[20px] flex-col items-start rounded-bl-[6px] rounded-tl-[14px] border border-r-0 border-[#b5b5b5] bg-[#f0f0f0] pl-[2px] pt-[5px]">
          <Svg><rect x="1.500" y="1.500" width="13" height="13" fill="#fff" stroke="#334" /><path d="M4 4l3 4M12 4L9 8" stroke="#1a6ce0" strokeWidth="2" /></Svg>
          <span className="-ml-[1px] mt-[4px] font-['Liberation_Mono',monospace] text-[10px] leading-[12px] text-[#222] [writing-mode:vertical-rl]">Variable</span>
        </div>
      </div>

      {/* red annotation drawn over the screenshot */}
      <div className="absolute left-[639px] top-[52px] h-[29px] w-[73px] border-[3px] border-[#f33c3c]" />
      <svg width="60" height="140" viewBox="0 0 60 140" className="absolute left-[600px] top-[78px] block">
        <polygon points="51,4 50.300,25 46.100,23.500 4,133 42.300,22.100 38,20.600" fill="#f33c3c" />
      </svg>
      <span className="absolute left-[545px] top-[221px] whitespace-nowrap font-['Noto_Sans_CJK_SC',sans-serif] text-[21px] leading-[28px] text-[#f34040]">
        下载、上传、写入<span className="font-['Roboto',sans-serif] text-[19.500px] tracking-[-0.4px]">FLash</span>
      </span>
    </div>
  );
}
